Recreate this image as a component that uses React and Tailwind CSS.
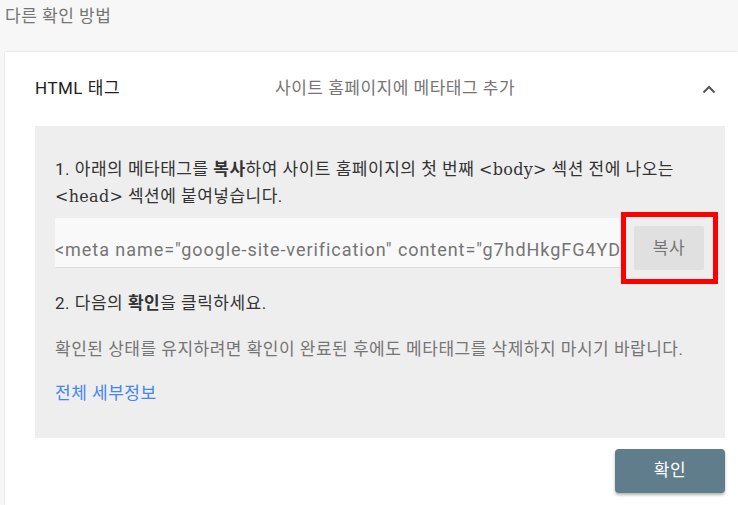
export default function App() {
  return (
    <div className="w-[738px] h-[505px] overflow-hidden bg-[#f7f7f7] font-['Roboto','Noto_Sans_CJK_KR',sans-serif] tracking-[0.5px] text-[17px]">
      <div className="pl-[5px] pt-[5px] h-[52px] leading-[22px] text-[#757575]">다른 확인 방법</div>
      <div className="ml-[5px] h-[453px] bg-white shadow-[0_0_2px_rgba(0,0,0,0.15)] pl-[30px] pr-[13px]">
        <div className="h-[74px] flex items-center">
          <div className="w-[240px] text-[#212121]">HTML 태그</div>
          <div className="flex-1 text-[#757575]">사이트 홈페이지에 메타태그 추가</div>
          <svg width="14" height="9" viewBox="0 0 14 9" className="mr-[9px]">
            <polyline points="1.5,7.5 7,2 12.5,7.5" fill="none" stroke="#555" strokeWidth="2" />
          </svg>
        </div>
        <div className="h-[312px] bg-[#eeeeee] pl-[20px] pt-[30px] leading-[27px] text-[#333]">
          <p>
            1. 아래의 메타태그를 <b>복사</b>하여 사이트 홈페이지의 첫 번째 <span className="font-['DejaVu_Serif',serif] text-[16px] tracking-[0.3px]">&lt;body&gt;</span> 섹션 전에 나오는
            <br />
            <span className="font-['DejaVu_Serif',serif] text-[16px] tracking-[0.3px]">&lt;head&gt;</span> 섹션에 붙여넣습니다.
          </p>
          <div className="flex items-start mt-[2px]">
            <div className="mt-[6px] w-[565px] h-[50px] bg-[#f9f9f9] border-b border-[#dcdcdc] overflow-hidden whitespace-nowrap text-[#757575] text-[18px] tracking-[0.95px] pt-[22px] leading-[20px]">
              &lt;meta name="google-site-verification" content="g7hdHkgFG4YD
            </div>
            <div className="ml-[1px] border-[5px] border-[#ff0000] pl-[8px] pr-[9px] py-[9px]">
              <div className="w-[70px] h-[44px] rounded-[2px] bg-[#e0e0e0] flex items-center justify-center text-[#757575]">복사</div>
            </div>
          </div>
          <p className="mt-[6px]">2. 다음의 <b>확인</b>을 클릭하세요.</p>
          <p className="mt-[19px] text-[#757575]">확인된 상태를 유지하려면 확인이 완료된 후에도 메타태그를 삭제하지 마시기 바랍니다.</p>
          <p className="mt-[17px] text-[#4285f4]">전체 세부정보</p>
        </div>
        <div className="flex justify-end mt-[11px]">
          <div className="w-[110px] h-[44px] rounded-[4px] bg-[#607d8b] shadow-[0_2px_3px_rgba(0,0,0,0.3)] flex items-center justify-center text-white">확인</div>
        </div>
      </div>
    </div>
  );
}
